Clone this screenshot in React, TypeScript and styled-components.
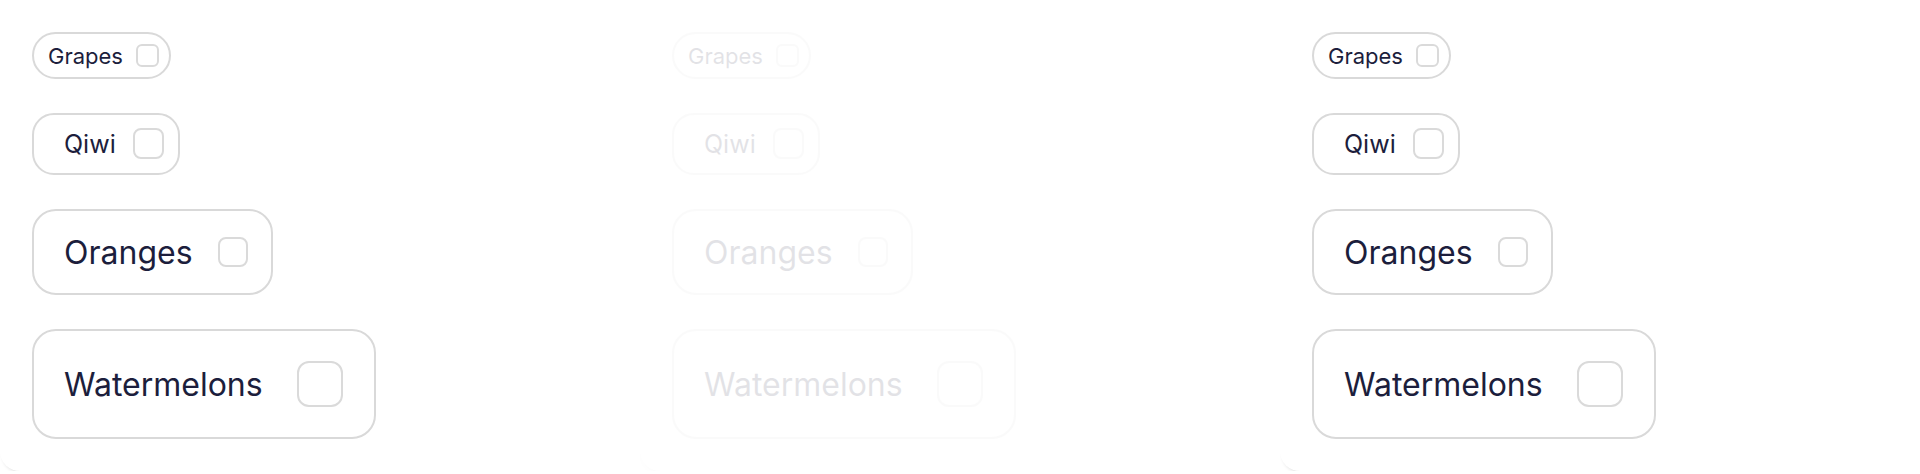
import React from "react";
import styled, { createGlobalStyle, css } from "styled-components";

const GlobalStyle = createGlobalStyle`
  html, body {
    margin: 0;
    padding: 0;
    background: #ffffff;
    font-family: Inter, "Noto Sans", "Liberation Sans", sans-serif;
  }
  * { box-sizing: border-box; }
`;

type Size = "sm" | "md" | "lg" | "xl";

const sizes: Record<
  Size,
  { h: number; pl: number; pr: number; gap: number; font: number; radius: number; box: number; boxRadius: number }
> = {
  sm: { h: 47, pl: 14, pr: 10, gap: 13, font: 22, radius: 24, box: 23, boxRadius: 6 },
  md: { h: 62, pl: 30, pr: 14, gap: 17, font: 25, radius: 22, box: 31, boxRadius: 8 },
  lg: { h: 87, pl: 30, pr: 23, gap: 25, font: 32, radius: 24, box: 30, boxRadius: 8 },
  xl: { h: 110, pl: 30, pr: 31, gap: 34, font: 32, radius: 24, box: 46, boxRadius: 12 },
};

const Row = styled.div`
  display: flex;
  width: 1920px;
`;

const Panel = styled.section<{ $disabled?: boolean }>`
  flex: 0 0 640px;
  height: 471px;
  padding: 32px;
  display: flex;
  flex-direction: column;
  align-items: flex-start;
  gap: 34px;
  background: #ffffff;
  border-radius: 0 0 0 20px;
  box-shadow: 0 4px 4px -4px rgba(0, 0, 0, 0.22);
  position: relative;
  ${(p) =>
    p.$disabled &&
    css`
      opacity: 0.12;
    `}
`;

const Chip = styled.label<{ $size: Size }>`
  display: inline-flex;
  align-items: center;
  border: 2px solid #d9d9d9;
  background: #ffffff;
  color: #1c1e3c;
  line-height: normal;
  cursor: pointer;
  ${({ $size }) => {
    const s = sizes[$size];
    return css`
      height: ${s.h}px;
      padding: 0 ${s.pr}px 0 ${s.pl}px;
      gap: ${s.gap}px;
      font-size: ${s.font}px;
      border-radius: ${s.radius}px;
    `;
  }}
`;

const Label = styled.span`
  font-weight: 400;
  letter-spacing: 0;
  padding-top: 1px;
`;

const Box = styled.input<{ $size: Size }>`
  appearance: none;
  -webkit-appearance: none;
  margin: 0;
  flex: 0 0 auto;
  border: 2px solid #dadada;
  background: #ffffff;
  ${({ $size }) => {
    const s = sizes[$size];
    return css`
      width: ${s.box}px;
      height: ${s.box}px;
      border-radius: ${s.boxRadius}px;
    `;
  }}
`;

const fruits: { label: string; size: Size }[] = [
  { label: "Grapes", size: "sm" },
  { label: "Qiwi", size: "md" },
  { label: "Oranges", size: "lg" },
  { label: "Watermelons", size: "xl" },
];

function FruitPanel({ disabled }: { disabled?: boolean }) {
  return (
    <Panel $disabled={disabled}>
      {fruits.map((f) => (
        <Chip key={f.label} $size={f.size}>
          <Label>{f.label}</Label>
          <Box type="checkbox" $size={f.size} disabled={disabled} />
        </Chip>
      ))}
    </Panel>
  );
}

export default function App() {
  return (
    <>
      <GlobalStyle />
      <Row>
        <FruitPanel />
        <FruitPanel disabled />
        <FruitPanel />
      </Row>
    </>
  );
}
